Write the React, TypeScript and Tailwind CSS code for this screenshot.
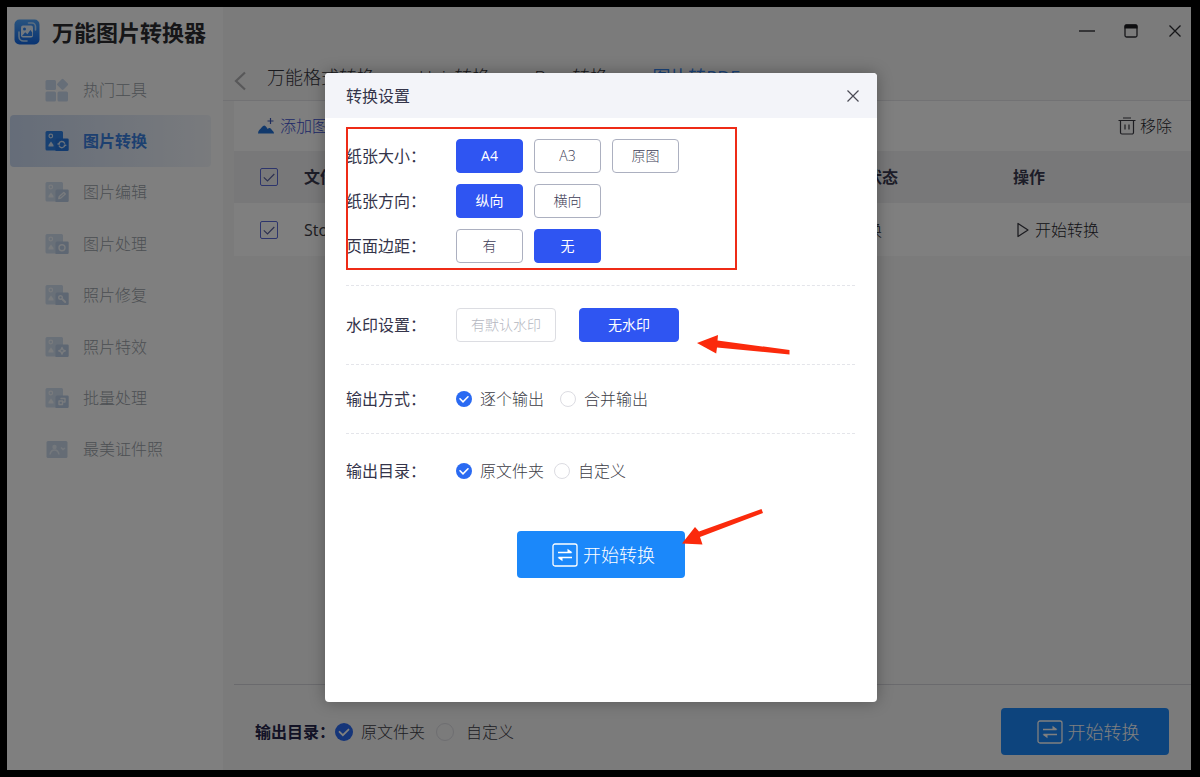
import { useState, type ReactNode } from "react";

function Logo() {
  return (
    <svg width="26" height="26" viewBox="0 0 26 26" fill="none" aria-hidden="true">
      <defs>
        <linearGradient id="logo-bg" x1="0" y1="0" x2="0" y2="1">
          <stop offset="0" stopColor="#4fa6ff" />
          <stop offset="1" stopColor="#1268e6" />
        </linearGradient>
      </defs>
      <rect x="0.5" y="0.5" width="25" height="25" rx="5" fill="url(#logo-bg)" />
      <path d="M5 13v4.500a4.500 4.500 0 0 0 4.500 4.500H13" stroke="#b9dcff" strokeWidth="1.600" strokeLinecap="round" />
      <path d="M14.500 4h3.500a3.500 3.500 0 0 1 3.500 3.500V11" stroke="#b9dcff" strokeWidth="1.600" strokeLinecap="round" />
      <rect x="7" y="6.500" width="12" height="12" rx="2" fill="#e3f0ff" />
      <circle cx="10.500" cy="10" r="1.500" fill="#2f86f5" />
      <path d="M8 17l3.200-3.800 2.200 2 3-4.200 1.800 2.500V17z" fill="#2f86f5" />
    </svg>
  );
}

function HotIcon() {
  return (
    <svg width="24" height="24" viewBox="0 0 24 24" fill="#cddcf0" aria-hidden="true">
      <rect x="0.500" y="2" width="10.500" height="10" rx="1.500" />
      <rect x="0.500" y="13.500" width="10.500" height="10" rx="1.500" />
      <rect x="12.500" y="13.500" width="10.500" height="10" rx="1.500" />
      <rect x="13.300" y="2" width="8.600" height="8.600" rx="1.300" transform="rotate(45 17.600 6.300)" />
    </svg>
  );
}

function SheetIcon({ back, front, ink, children }: { back: string; front: string; ink: string; children: ReactNode }) {
  return (
    <svg width="24" height="24" viewBox="0 0 24 24" fill="none" aria-hidden="true">
      <path d="M2 2h14.500A1.500 1.500 0 0 1 18 3.500V21.500H2A1.500 1.500 0 0 1 .500 20V3.500A1.500 1.500 0 0 1 2 2z" fill={back} />
      <circle cx="5.800" cy="7" r="1.800" stroke={ink} strokeWidth="1.200" />
      <path d="M3.500 17.500v-1.500L6 12.500 8.500 16v1.500z" fill={ink} />
      <path d="M12 9.500h10.500a1.200 1.200 0 0 1 1.200 1.200v10a1.200 1.200 0 0 1-1.200 1.200H10.500V11A1.500 1.500 0 0 1 12 9.500z" fill={front} />
      <g stroke={ink} strokeWidth="1.400" strokeLinecap="round" strokeLinejoin="round">
        {children}
      </g>
    </svg>
  );
}

const soft = { back: "#d3e0f1", front: "#bccee6", ink: "#f2f6fb" };
const vivid = { back: "#2f80e4", front: "#2777de", ink: "#d3e2f6" };

const sidebarItems: { label: string; icon: ReactNode }[] = [
  { label: "热门工具", icon: <HotIcon /> },
  {
    label: "图片转换",
    icon: (
      <SheetIcon {...vivid}>
        <path d="M13.800 15a3.100 3.100 0 0 1 5.800-.800M20 16.200a3.100 3.100 0 0 1-5.800 .800M13 15h1.500M19.300 16.200h1.500" />
      </SheetIcon>
    ),
  },
  {
    label: "图片编辑",
    icon: (
      <SheetIcon {...soft}>
        <path d="M13.800 18.500l.500-2 4.500-4 1.500 1.500-4.500 4z" />
      </SheetIcon>
    ),
  },
  {
    label: "图片处理",
    icon: (
      <SheetIcon {...soft}>
        <circle cx="17" cy="15.800" r="3" />
      </SheetIcon>
    ),
  },
  {
    label: "照片修复",
    icon: (
      <SheetIcon {...soft}>
        <circle cx="15.500" cy="14.500" r="1.800" />
        <path d="M17.200 16l3 3" strokeWidth="2" />
      </SheetIcon>
    ),
  },
  {
    label: "照片特效",
    icon: (
      <SheetIcon {...soft}>
        <path d="M17 12.500l1 2.300 2.300 1-2.300 1-1 2.300-1-2.300-2.300-1 2.300-1z" />
      </SheetIcon>
    ),
  },
  {
    label: "批量处理",
    icon: (
      <SheetIcon {...soft}>
        <path d="M16 12.500h4V16h-2M14 15h3.500v3.500H14z" />
      </SheetIcon>
    ),
  },
  {
    label: "最美证件照",
    icon: (
      <svg width="24" height="24" viewBox="0 0 24 24" fill="none" aria-hidden="true">
        <rect x="1.500" y="4" width="21" height="17" rx="1.500" fill="#cbd9eb" />
        <circle cx="9.500" cy="10" r="2.200" fill="#e9f0f9" />
        <path d="M5 17.500c.500-3 2.300-4.500 4.500-4.500s4 1.500 4.500 4.500M16 10.500l2 2 2-1.500" stroke="#e9f0f9" strokeWidth="1.500" />
      </svg>
    ),
  },
];

function Sidebar() {
  return (
    <aside className="flex w-[216px] shrink-0 flex-col bg-white">
      <div className="flex h-[57px] items-center gap-3 pb-2 pl-[7px]">
        <Logo />
        <h1 className="text-[22px] leading-8 font-bold whitespace-nowrap text-[#2c2c30]">万能图片转换器</h1>
      </div>
      <nav className="grid h-[411px] auto-rows-fr pr-3 pl-[3px]">
        {sidebarItems.map((item) => {
          const active = item.label === "图片转换";
          return (
            <a
              key={item.label}
              href="#"
              aria-current={active ? "page" : undefined}
              className={
                active
                  ? "flex items-center gap-[14px] rounded bg-linear-to-r from-[#cbdaf2] to-[#f3f6fb] pl-[35px] font-bold text-[#3a80e0]"
                  : "flex items-center gap-[14px] pl-[35px] font-light text-[#9a9fa8]"
              }
            >
              {item.icon}
              <span>{item.label}</span>
            </a>
          );
        })}
      </nav>
    </aside>
  );
}

function CheckBox({ label }: { label: string }) {
  const [on, setOn] = useState(true);
  return (
    <span className="relative block size-[18px]">
      <input
        type="checkbox"
        aria-label={label}
        checked={on}
        onChange={() => setOn(!on)}
        className="peer block size-[18px] appearance-none rounded-xs border border-[#5a6ad8]"
      />
      <svg
        className="pointer-events-none absolute inset-0 hidden peer-checked:block"
        width="18"
        height="18"
        viewBox="0 0 18 18"
        fill="none"
        stroke="#5b62a0"
        strokeWidth="1.200"
        aria-hidden="true"
      >
        <path d="M3.800 9.300l3.700 3.700 6.800-7" />
      </svg>
    </span>
  );
}

function Radio({
  name,
  label,
  checked,
  onChange,
  large = false,
  wide = false,
}: {
  name: string;
  label: string;
  checked: boolean;
  onChange: () => void;
  large?: boolean;
  wide?: boolean;
}) {
  return (
    <label className={wide ? "flex items-center gap-3" : "flex items-center gap-2"}>
      <span className={large ? "relative block size-[18px]" : "relative block size-4"}>
        <input
          type="radio"
          name={name}
          checked={checked}
          onChange={onChange}
          className="peer block size-full appearance-none rounded-full border border-[#dcdce2] checked:border-0 checked:bg-[#2a6af2]"
        />
        <svg
          className="pointer-events-none absolute inset-0 hidden size-full peer-checked:block"
          viewBox="0 0 16 16"
          fill="none"
          stroke="#fff"
          strokeWidth="1.600"
          strokeLinecap="round"
          aria-hidden="true"
        >
          <path d="M4 7.800l3 3 5-5" />
        </svg>
      </span>
      <span className="font-light text-[#3c3c46]">{label}</span>
    </label>
  );
}

function StartButton() {
  return (
    <button
      type="button"
      className="flex h-[47px] w-[168px] items-center justify-center gap-[5px] rounded bg-[#1b88fa] pl-[6px] text-lg leading-6 font-light text-white"
    >
      <svg width="26" height="24" viewBox="0 0 26 24" fill="none" stroke="#fff" strokeWidth="1.300" aria-hidden="true">
        <rect x="1" y="1" width="24" height="22" rx="2" />
        <path d="M6 9.500h13.500M6.500 14.500H20" strokeWidth="1.500" />
        <path d="M15.500 9.500V5.800l5 3.700zM10.500 14.500v3.700l-5-3.700z" fill="#fff" stroke="none" />
      </svg>
      开始转换
    </button>
  );
}

function WindowControls() {
  return (
    <div className="flex h-12 items-center justify-end gap-7 pr-2">
      <button type="button" aria-label="最小化">
        <svg width="16" height="16" viewBox="0 0 16 16" stroke="#2e2e33" strokeWidth="1.400" aria-hidden="true">
          <path d="M0 8h16" />
        </svg>
      </button>
      <button type="button" aria-label="最大化">
        <svg width="16" height="16" viewBox="0 0 16 16" fill="none" aria-hidden="true">
          <rect x="2" y="2" width="12" height="12" rx="1.500" stroke="#2e2e33" strokeWidth="1.300" />
          <path d="M1.500 3A1.500 1.500 0 0 1 3 1.500h10A1.500 1.500 0 0 1 14.500 3v2.500h-13z" fill="#1c1c20" />
        </svg>
      </button>
      <button type="button" aria-label="关闭窗口">
        <svg width="16" height="16" viewBox="0 0 16 16" stroke="#2e2e33" strokeWidth="1.300" aria-hidden="true">
          <path d="M2.500 2.500l11 11M13.500 2.500l-11 11" />
        </svg>
      </button>
    </div>
  );
}

function Main() {
  const [dir, setDir] = useState("原文件夹");
  return (
    <main className="flex min-w-0 flex-1 flex-col bg-[#f6f6f7]">
      <WindowControls />
      <div className="flex h-[46px] items-center border-b border-[#e4e4e8] pb-[2px] pl-[10px] text-lg leading-6 text-[#33333a]">
        <button type="button" aria-label="返回" className="mt-2 mr-[19px] flex">
          <svg width="15" height="20" viewBox="0 0 15 20" fill="none" stroke="#b0b0b3" strokeWidth="2.200" aria-hidden="true">
            <path d="M12 1.500L3 10l9 8.500" />
          </svg>
        </button>
        <div className="flex gap-11 whitespace-nowrap">
          <a href="#" className="font-light">万能格式转换</a>
          <a href="#" className="font-light">Heic转换</a>
          <a href="#" className="font-light">Bmp转换</a>
          <a href="#" className="font-normal text-[#3787f2]">图片转PDF</a>
        </div>
      </div>
      <div className="flex flex-1 flex-col pl-[11px]">
        <div className="flex h-[50px] items-center justify-between bg-white pr-[19px] pl-[23px]">
          <button type="button" className="flex items-center gap-1 font-light text-[#3c50d0]">
            <svg width="19" height="20" viewBox="0 0 19 20" fill="#2372d8" aria-hidden="true">
              <path d="M1 17.500c0-3 2-4 4-6.500 1.500-2 3-2 4.300 0l1.400 2c1.300-1.500 2.800-1 3.800.500 1 1.600 2.500 2 2.500 4z" />
              <path d="M13.500 2v6M10.500 5h6" stroke="#3f5bb8" strokeWidth="1.200" />
            </svg>
            添加图片
          </button>
          <button type="button" className="flex items-center gap-1 font-light text-[#26262e]">
            <svg width="18" height="18" viewBox="0 0 18 18" fill="none" stroke="#3a3a42" strokeWidth="1.200" aria-hidden="true">
              <path d="M0.500 3.500h17M5 1h8M2.500 3.500v12a1.500 1.500 0 0 0 1.500 1.500h10a1.500 1.500 0 0 0 1.500-1.500v-12M7 7.500v5M11 7.500v5" />
            </svg>
            移除
          </button>
        </div>
        <table className="w-full table-fixed text-left">
          <colgroup>
            <col className="w-[70px]" />
            <col />
            <col className="w-[195px]" />
            <col className="w-[178px]" />
          </colgroup>
          <thead>
            <tr className="h-[52px] bg-[#f1f1f3] text-[#3a3a50]">
              <th className="pl-[26px]"><CheckBox label="全选" /></th>
              <th className="font-bold">文件名</th>
              <th className="pl-12 font-bold">状态</th>
              <th className="font-bold">操作</th>
            </tr>
          </thead>
          <tbody>
            <tr className="h-[53px] bg-white font-light text-[#26262e]">
              <td className="pl-[26px]"><CheckBox label="选择文件" /></td>
              <td className="font-normal text-[#3a3a42]">Story</td>
              <td>等待转换</td>
              <td>
                <button type="button" className="flex items-center gap-1 pl-[2px]">
                  <svg width="16" height="18" viewBox="0 0 16 18" fill="none" stroke="#3a3a42" strokeWidth="1.300" strokeLinejoin="round" aria-hidden="true">
                    <path d="M3 2.500l10 6.500-10 6.500z" />
                  </svg>
                  开始转换
                </button>
              </td>
            </tr>
          </tbody>
        </table>
        <footer className="mt-auto flex h-[86px] items-center border-t border-[#d5d5da] pt-2 pr-[22px] pl-[21px]">
          <span className="font-bold text-[#25254a]">输出目录：</span>
          <div className="flex gap-[11px]">
            <Radio name="footer-dir" label="原文件夹" large checked={dir === "原文件夹"} onChange={() => setDir("原文件夹")} />
            <Radio name="footer-dir" label="自定义" large wide checked={dir === "自定义"} onChange={() => setDir("自定义")} />
          </div>
          <div className="ml-auto">
            <StartButton />
          </div>
        </footer>
      </div>
    </main>
  );
}

function Choice({
  label,
  selected,
  onSelect,
  muted = false,
  wide = false,
}: {
  label: string;
  selected: boolean;
  onSelect: () => void;
  muted?: boolean;
  wide?: boolean;
}) {
  const width = wide ? "w-[100px]" : "w-[67px]";
  const tone = selected
    ? "border-[#2f55f2] bg-[#2f55f2] text-white"
    : muted
      ? "border-[#dcdde2] bg-white font-light text-[#b4b6c0]"
      : "border-[#acb0c0] bg-white font-light text-[#3c3c56]";
  return (
    <button
      type="button"
      aria-pressed={selected}
      onClick={onSelect}
      className={`${width} ${tone} h-[34px] rounded border text-sm leading-5`}
    >
      {label}
    </button>
  );
}

function ChoiceRow({
  label,
  options,
  initial,
  wide = false,
}: {
  label: string;
  options: string[];
  initial: string;
  wide?: boolean;
}) {
  const [value, setValue] = useState(initial);
  return (
    <div className="flex items-center" role="group" aria-label={label}>
      <span className="w-[110px]">{label}：</span>
      <div className={wide ? "flex gap-[23px]" : "flex gap-[11px]"}>
        {options.map((option) => (
          <Choice
            key={option}
            label={option}
            wide={wide}
            muted={wide}
            selected={option === value}
            onSelect={() => setValue(option)}
          />
        ))}
      </div>
    </div>
  );
}

function RadioRow({ label, name, options, tight = false }: { label: string; name: string; options: string[]; tight?: boolean }) {
  const [value, setValue] = useState(options[0]);
  return (
    <div className="flex items-center" role="radiogroup" aria-label={label}>
      <span className="w-[110px]">{label}：</span>
      <div className={tight ? "flex gap-[10px]" : "flex gap-4"}>
        {options.map((option) => (
          <Radio key={option} name={name} label={option} checked={option === value} onChange={() => setValue(option)} />
        ))}
      </div>
    </div>
  );
}

function SettingsDialog() {
  return (
    <section
      role="dialog"
      aria-label="转换设置"
      className="relative w-[552px] overflow-hidden rounded bg-white pb-[124px] text-[#34344a] shadow-[0_0_16px_rgba(0,0,0,0.3)]"
    >
      <header className="flex h-[45px] items-center justify-between bg-[#f3f4f9] pr-[17px] pl-[21px]">
        <h2 className="font-normal">转换设置</h2>
        <button type="button" aria-label="关闭">
          <svg width="14" height="14" viewBox="0 0 14 14" stroke="#4a4a55" strokeWidth="1.200" aria-hidden="true">
            <path d="M1.500 1.500l11 11M12.500 1.500l-11 11" />
          </svg>
        </button>
      </header>
      <div className="pr-[22px] pl-[21px] font-normal">
        <div className="flex flex-col gap-[11px] border-b border-dashed border-[#e4e5ea] pt-[21px] pb-[22px]">
          <ChoiceRow label="纸张大小" options={["A4", "A3", "原图"]} initial="A4" />
          <ChoiceRow label="纸张方向" options={["纵向", "横向"]} initial="纵向" />
          <ChoiceRow label="页面边距" options={["有", "无"]} initial="无" />
        </div>
        <div className="border-b border-dashed border-[#e4e5ea] py-[22px]">
          <ChoiceRow label="水印设置" options={["有默认水印", "无水印"]} initial="无水印" wide />
        </div>
        <div className="border-b border-dashed border-[#e4e5ea] py-[22px]">
          <RadioRow label="输出方式" name="output-mode" options={["逐个输出", "合并输出"]} />
        </div>
        <div className="pt-[25px]">
          <RadioRow label="输出目录" name="output-dir" options={["原文件夹", "自定义"]} tight />
        </div>
        <div className="mt-12 flex justify-center">
          <StartButton />
        </div>
      </div>
      <div className="pointer-events-none absolute top-[54px] left-[21px] h-[143px] w-[391px] border-2 border-[#ee2b17]" />
      <svg className="pointer-events-none absolute top-0 left-0" width="552" height="629" viewBox="325 73 552 629" fill="#fb2a0c" aria-hidden="true">
        <path d="M697 343l21-8-.500 5.500L789.500 350v4.500L717 347.500l-.800 6z" />
        <path d="M682 543.500L695 527l4 4.500 62.500-22.500 1.500 4-63 24 2.500 7.500z" />
      </svg>
    </section>
  );
}

export default function App() {
  return (
    <div className="relative flex min-h-screen bg-black pt-[7px] pr-[9px] pb-[7px] pl-[7px] font-['Open_Sans','Noto_Sans_CJK_SC',sans-serif] text-base leading-6">
      <div className="flex min-w-0 flex-1">
        <Sidebar />
        <Main />
      </div>
      <div className="absolute inset-0 flex items-center justify-center bg-black/50 pb-[2px] pl-[2px]">
        <SettingsDialog />
      </div>
    </div>
  );
}
